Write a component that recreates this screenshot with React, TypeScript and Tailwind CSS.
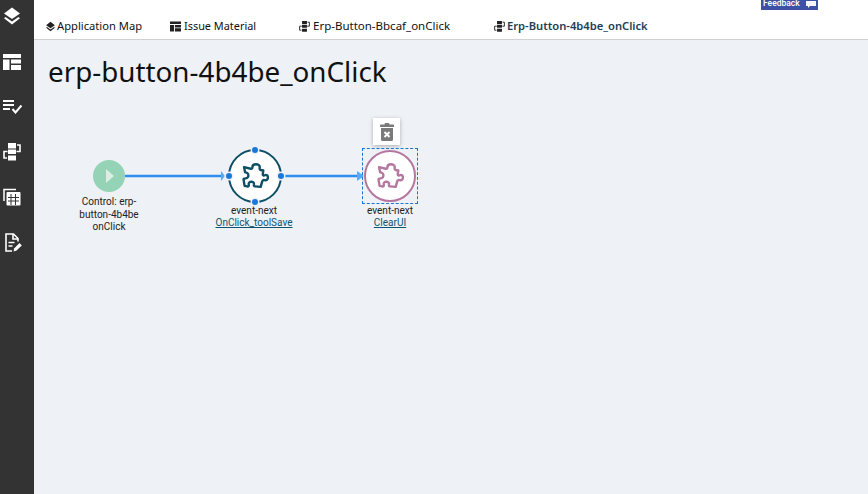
import React from "react";

const Layers = ({ s = 20 }: { s?: number }) => (
  <svg width={s} height={s} viewBox="0 0 20 20" fill="currentColor">
    <path d="M10 1.500 18 7.500 10 13 2 7.500Z" />
    <path d="M3.600 11 2 12.200 10 18.500 18 12.200 16.400 11 10 15.600Z" />
  </svg>
);
const Dash = ({ s = 18 }: { s?: number }) => (
  <svg width={s} height={s} viewBox="0 0 18 18" fill="currentColor">
    <path d="M0 1h18v4H0zM0 6.500h6.500V17H0zM8 6.500h10v4H8zM8 12h10v5H8z" />
  </svg>
);
const Flow = ({ s = 18, w = 1.600 }: { s?: number; w?: number }) => (
  <svg width={s} height={s} viewBox="0 0 18 18" fill="currentColor">
    <path d="M5 0h8v5.500H5zM5 6.500h8v4.500H5zM5 12.500h8v5H5z" />
    <path d="M14 2h3v6.500h-3.500M4.500 8.500H1V15h3" fill="none" stroke="currentColor" strokeWidth={w} />
  </svg>
);
const Puzzle = ({ color }: { color: string }) => (
  <svg width="27" height="27" viewBox="0 0 26 26" fill="none" stroke={color} strokeWidth="2.300" strokeLinejoin="round">
    <path d="M2 4 8.500 5.500C9.500 5.700 10 5 10 4 10 2 11.500 1.200 13.500 1.200 15.500 1.200 17.500 2.500 17 4.500 16.800 5.500 17 6.500 18 6.700L20.500 7.200 20 11C20 12 21 12.300 21.800 11.800 23.500 11 25 12 25 14 25 16 23.500 17 21.800 16.500 20.800 16.200 20 16.500 19.500 17.500L18 23 12.500 22.500C11.500 22.400 11.300 21.500 11.500 20.500 11.800 18.800 10.500 18 9 18 7.500 18 6 19 6.500 21 6.700 22 6 23 5 22.500L2.500 22 1.500 16C1.500 15 2.500 14.800 3.500 14.800 5.500 14.800 6.500 13 6 11 5.500 9.500 4 9 3 9Z" />
  </svg>
);
const Dot = ({ className }: { className: string }) => (
  <span className={"absolute h-[6px] w-[6px] rounded-full bg-[#1a78dc] shadow-[0_0_0_1.5px_#eef1f5] " + className} />
);
const Arrow = ({ className, width, bar }: { className: string; width: number; bar?: boolean }) => (
  <svg className={"absolute " + className} width={width} height="12" viewBox={`0 0 ${width} 12`}>
    <path d={`M0 6H${width - 2}`} stroke="#2f8fef" strokeWidth="2.400" />
    <path d={bar ? `M${width - 4} 1 ${width} 6 ${width - 4} 11Z` : `M${width - 7} 1 ${width} 6 ${width - 7} 11Z`} fill="#5ba9f5" />
  </svg>
);

export default function App() {
  return (
    <div className="flex h-[494px] w-[868px] overflow-hidden bg-[#eef1f5] font-['Noto_Sans',sans-serif]">
      <aside className="flex w-[34px] shrink-0 flex-col items-start bg-[#333333] pl-[3px] pt-[6px] text-white">
        <span className="-ml-px flex h-[20px] items-center"><Layers /></span>
        <span className="mt-[26px] flex h-[20px] items-center"><Dash /></span>
        <span className="mt-[25px] flex h-[20px] items-center">
          <svg width="19" height="14" viewBox="0 0 19 14" fill="none" stroke="currentColor" strokeWidth="1.800">
            <path d="M0 1h11M0 5h11M0 9h7" />
            <path d="M9.500 9 12.500 12.500 18.500 5.500" strokeWidth="2" />
          </svg>
        </span>
        <span className="mt-[25px] flex h-[20px] items-center"><Flow /></span>
        <span className="mt-[25px] flex h-[20px] items-center">
          <svg width="18" height="18" viewBox="0 0 18 18">
            <path d="M1 13V1.500h12" fill="none" stroke="#fff" strokeWidth="1.500" />
            <rect x="3.500" y="4" width="14" height="13.500" rx="1" fill="#fff" />
            <path d="M8 6v11M12.500 6v11M5 9.500h11M5 13h11" stroke="#333" strokeWidth="1" />
          </svg>
        </span>
        <span className="ml-[2px] mt-[25px] flex h-[20px] items-center">
          <svg width="17" height="19" viewBox="0 0 17 19" fill="none" stroke="#fff" strokeWidth="1.600">
            <path d="M7 18H1V1h7.500L13 5.500v3" />
            <path d="M8 1v5h5M3.500 9.500h6M3.500 13h4" />
            <path d="M8.500 18.500l.8-3.200 5.200-5.200 2.300 2.300-5.200 5.200z" fill="#fff" stroke="none" />
          </svg>
        </span>
      </aside>
      <div className="flex min-w-0 flex-1 flex-col">
        <header className="relative flex h-[40px] shrink-0 items-end border-b border-[#cfd1d4] bg-white pb-[4px] text-[11.200px] leading-[18px] text-[#111]">
          <span className="ml-[11px] flex w-[125px] items-center gap-px"><span className="flex w-[11px] text-[#222]"><Layers s={11} /></span>Application Map</span>
          <span className="flex w-[129px] items-center gap-[3px] text-[10.900px]"><span className="flex w-[11px] text-[#222]"><Dash s={11} /></span>Issue Material</span>
          <span className="flex w-[195px] items-center gap-[3px] text-[11.500px]"><span className="flex w-[11px] text-[#222]"><Flow s={11} w={1.500} /></span>Erp-Button-Bbcaf_onClick</span>
          <span className="flex items-center gap-[2px] font-semibold text-[#1c3f55]"><span className="flex w-[11px] text-[#222]"><Flow s={11} w={1.500} /></span>Erp-Button-4b4be_onClick</span>
          <span className="absolute left-[727px] top-0 flex h-[10px] w-[57px] items-end gap-[6px] overflow-hidden bg-[#3f51a5] pl-[2px] font-['Roboto',sans-serif] text-[8.500px] font-medium leading-[10px] text-white">
            <span className="-translate-y-[2px]">Feedback</span>
            <svg className="mb-[2px] shrink-0" width="10" height="7" viewBox="0 0 10 7"><path d="M0 0H10V5H4L2 7V5H0Z" fill="#f4f4fa" /></svg>
          </span>
        </header>
        <main className="relative flex-1">
          <h1 className="pl-[14px] pt-[11px] text-[27.800px] leading-[40px] text-[#111]">erp-button-4b4be_onClick</h1>

          <Arrow className="left-[91px] top-[130px]" width={100} bar />
          <Arrow className="left-[251px] top-[130px]" width={79} />

          <div className="absolute left-[59px] top-[120px] flex h-[32px] w-[32px] items-center justify-center rounded-full bg-[#94d3b5]">
            <svg className="ml-[2px]" width="8" height="14" viewBox="0 0 8 14"><path d="M0 0 8 7 0 14Z" fill="#e1ebe3" /></svg>
          </div>
          <div className="absolute left-[43px] top-[156px] w-[64px] text-center font-['Roboto',sans-serif] text-[10px] leading-[12.700px] text-[#222]">Control: erp-button-4b4be onClick</div>

          <div className="absolute left-[194px] top-[109px] flex h-[54px] w-[54px] items-center justify-center rounded-full border-[2px] border-[#0e4f66] bg-white">
            <Puzzle color="#0e4f66" />
            <Dot className="left-1/2 top-[-4px] -ml-[3px]" />
            <Dot className="left-1/2 bottom-[-4px] -ml-[3px]" />
            <Dot className="top-1/2 left-[-4px] -mt-[3px]" />
            <Dot className="top-1/2 right-[-4px] -mt-[3px]" />
          </div>
          <div className="absolute left-[170px] top-[165px] w-[100px] text-center font-['Roboto',sans-serif] text-[10px] leading-[12px] text-[#222]">
            <div>event-next</div>
            <div className="text-[#0e5470] underline">OnClick_toolSave</div>
          </div>

          <div className="absolute left-[339px] top-[78px] flex h-[27px] w-[27px] items-center justify-center bg-white shadow-[0_1px_4px_rgba(0,0,0,0.28)]">
            <svg width="14" height="18" viewBox="0 0 14 18">
              <path d="M4.500 1.500C4.500.5 5 0 6 0h2c1 0 1.500.5 1.500 1.500H13a1 1 0 0 1 1 1V4H0V2.500a1 1 0 0 1 1-1z" fill="#7a7a7a" />
              <path d="M1 5h12v11.500a1.500 1.500 0 0 1-1.500 1.500h-9A1.500 1.500 0 0 1 1 16.500z" fill="#7a7a7a" />
              <path d="M4.500 9l5 5M9.500 9l-5 5" stroke="#fff" strokeWidth="2" />
            </svg>
          </div>
          <div className="absolute left-[328px] top-[108px] flex h-[56px] w-[56px] items-center justify-center border border-dashed border-[#1976d2]">
            <div className="flex h-[52px] w-[52px] items-center justify-center rounded-full border-[2px] border-[#b5779f] bg-white">
              <Puzzle color="#b5779f" />
            </div>
          </div>
          <div className="absolute left-[306px] top-[165px] w-[100px] text-center font-['Roboto',sans-serif] text-[10px] leading-[12px] text-[#222]">
            <div>event-next</div>
            <div className="text-[#0e5470] underline">ClearUI</div>
          </div>
        </main>
      </div>
    </div>
  );
}
